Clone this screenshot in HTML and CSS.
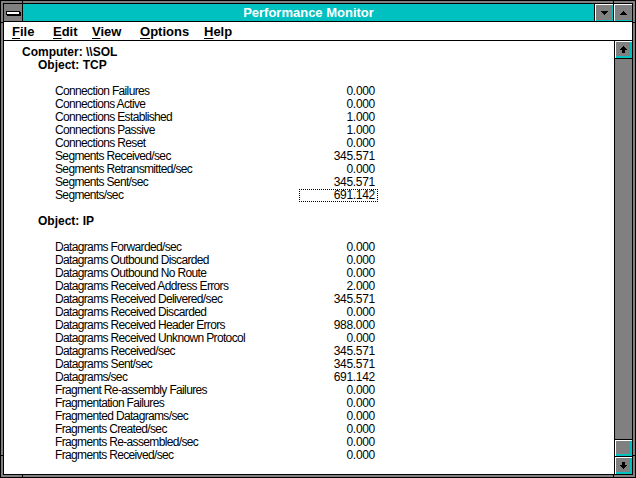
FILE: index.html
```html
<!DOCTYPE html>
<html>
<head>
<meta charset="utf-8">
<title>Performance Monitor</title>
<link rel="stylesheet" href="styles.css">
</head>
<body>
<div class="window">
  <div class="frame">
    <div class="titlebar">
      <div class="sysmenu"><span class="sysbar"></span></div>
      <div class="title">Performance Monitor</div>
      <div class="capbtn">
        <svg width="7" height="4" viewBox="0 0 7 4" shape-rendering="crispEdges"><rect x="0" y="0" width="7" height="1"/><rect x="1" y="1" width="5" height="1"/><rect x="2" y="2" width="3" height="1"/><rect x="3" y="3" width="1" height="1"/></svg>
      </div>
      <div class="capbtn">
        <svg width="7" height="4" viewBox="0 0 7 4" shape-rendering="crispEdges"><rect x="3" y="0" width="1" height="1"/><rect x="2" y="1" width="3" height="1"/><rect x="1" y="2" width="5" height="1"/><rect x="0" y="3" width="7" height="1"/></svg>
      </div>
    </div>
    <div class="menubar">
      <span class="mi mi-file"><u>F</u>ile</span>
      <span class="mi mi-edit"><u>E</u>dit</span>
      <span class="mi mi-view"><u>V</u>iew</span>
      <span class="mi mi-options"><u>O</u>ptions</span>
      <span class="mi"><u>H</u>elp</span>
    </div>
    <div class="main">
      <div class="client">
        <div class="line computer">Computer: \\SOL</div>
        <div class="line object">Object: TCP</div>
        <div class="line"></div>
        <div class="row"><span class="label">Connection Failures</span><span class="val">0.000</span></div>
        <div class="row"><span class="label">Connections Active</span><span class="val">0.000</span></div>
        <div class="row"><span class="label">Connections Established</span><span class="val">1.000</span></div>
        <div class="row"><span class="label">Connections Passive</span><span class="val">1.000</span></div>
        <div class="row"><span class="label">Connections Reset</span><span class="val">0.000</span></div>
        <div class="row"><span class="label">Segments Received/sec</span><span class="val">345.571</span></div>
        <div class="row"><span class="label">Segments Retransmitted/sec</span><span class="val">0.000</span></div>
        <div class="row"><span class="label">Segments Sent/sec</span><span class="val">345.571</span></div>
        <div class="row"><span class="label">Segments/sec</span><span class="val focus">691.142</span></div>
        <div class="line"></div>
        <div class="line object">Object: IP</div>
        <div class="line"></div>
        <div class="row"><span class="label">Datagrams Forwarded/sec</span><span class="val">0.000</span></div>
        <div class="row"><span class="label">Datagrams Outbound Discarded</span><span class="val">0.000</span></div>
        <div class="row"><span class="label">Datagrams Outbound No Route</span><span class="val">0.000</span></div>
        <div class="row"><span class="label">Datagrams Received Address Errors</span><span class="val">2.000</span></div>
        <div class="row"><span class="label">Datagrams Received Delivered/sec</span><span class="val">345.571</span></div>
        <div class="row"><span class="label">Datagrams Received Discarded</span><span class="val">0.000</span></div>
        <div class="row"><span class="label">Datagrams Received Header Errors</span><span class="val">988.000</span></div>
        <div class="row"><span class="label">Datagrams Received Unknown Protocol</span><span class="val">0.000</span></div>
        <div class="row"><span class="label">Datagrams Received/sec</span><span class="val">345.571</span></div>
        <div class="row"><span class="label">Datagrams Sent/sec</span><span class="val">345.571</span></div>
        <div class="row"><span class="label">Datagrams/sec</span><span class="val">691.142</span></div>
        <div class="row"><span class="label">Fragment Re-assembly Failures</span><span class="val">0.000</span></div>
        <div class="row"><span class="label">Fragmentation Failures</span><span class="val">0.000</span></div>
        <div class="row"><span class="label">Fragmented Datagrams/sec</span><span class="val">0.000</span></div>
        <div class="row"><span class="label">Fragments Created/sec</span><span class="val">0.000</span></div>
        <div class="row"><span class="label">Fragments Re-assembled/sec</span><span class="val">0.000</span></div>
        <div class="row"><span class="label">Fragments Received/sec</span><span class="val">0.000</span></div>
      </div>
      <div class="vscroll">
        <div class="sbtn sbtn-up">
          <svg width="7" height="7" viewBox="0 0 7 7" shape-rendering="crispEdges"><rect x="3" y="0" width="1" height="1"/><rect x="2" y="1" width="3" height="1"/><rect x="1" y="2" width="5" height="1"/><rect x="0" y="3" width="7" height="1"/><rect x="2" y="4" width="3" height="3"/></svg>
        </div>
        <div class="track"></div>
        <div class="thumb"></div>
        <div class="sbtn sbtn-down">
          <svg width="7" height="7" viewBox="0 0 7 7" shape-rendering="crispEdges"><rect x="2" y="0" width="3" height="3"/><rect x="0" y="3" width="7" height="1"/><rect x="1" y="4" width="5" height="1"/><rect x="2" y="5" width="3" height="1"/><rect x="3" y="6" width="1" height="1"/></svg>
        </div>
      </div>
    </div>
  </div>
  <span class="notch notch-h notch-t1"></span>
  <span class="notch notch-h notch-t2"></span>
  <span class="notch notch-h notch-b1"></span>
  <span class="notch notch-h notch-b2"></span>
  <span class="notch notch-v notch-l1"></span>
  <span class="notch notch-v notch-l2"></span>
  <span class="notch notch-v notch-r1"></span>
  <span class="notch notch-v notch-r2"></span>
</div>
</body>
</html>
```
FILE: styles.css
```css
* { box-sizing: border-box; }
html, body { margin: 0; padding: 0; background: #fff; }

.window {
  position: relative;
  width: 636px;
  height: 478px;
  border: 1px solid #000;
  padding: 2px;
  background: #808080;
  font-family: "Liberation Sans", Arial, sans-serif;
  color: #000;
}

.frame {
  height: 100%;
  border: 1px solid #000;
  display: flex;
  flex-direction: column;
  background: #fff;
}

/* title bar */
.titlebar {
  height: 18px;
  display: flex;
  background: #00c0c0;
  border-bottom: 1px solid #000;
  flex: none;
}
.sysmenu {
  width: 19px;
  background: #808080;
  border-right: 1px solid #000;
  display: flex;
  align-items: center;
  justify-content: center;
}
.sysbar {
  display: block;
  width: 14px;
  height: 4px;
  background: #fff;
  border: 1px solid #000;
  box-shadow: 1px 1px 0 #000;
  margin-left: -1px;
}
.title {
  flex: 1;
  text-align: center;
  color: #fff;
  font-weight: bold;
  font-size: 13px;
  line-height: 17px;
}
.capbtn {
  width: 19px;
  border-left: 1px solid #000;
  background: #808080;
  box-shadow: inset 1px 1px 0 #fff, inset -1px -1px 0 #00c0c0;
  display: flex;
  align-items: center;
  justify-content: center;
}
.capbtn svg { display: block; fill: #000; }

/* menu bar */
.menubar {
  height: 19px;
  border-bottom: 1px solid #000;
  display: flex;
  padding-left: 8px;
  padding-top: 1px;
  font-weight: bold;
  font-size: 13px;
  line-height: 17px;
  flex: none;
}
.mi { display: block; white-space: nowrap; }
.mi u { text-decoration-thickness: 1px; text-underline-offset: 2px; }
.mi-file { width: 41px; }
.mi-edit { width: 39px; }
.mi-view { width: 48px; }
.mi-options { width: 64px; }

/* main area */
.main {
  flex: 1;
  display: flex;
  min-height: 0;
}
.client {
  flex: 1;
  padding-top: 5px;
  padding-left: 18px;
  overflow: hidden;
}
.line {
  height: 13px;
  font-size: 12px;
  line-height: 13px;
  font-weight: bold;
  white-space: nowrap;
}
.object { padding-left: 16px; }

.row {
  display: grid;
  grid-template-columns: 244px 79px;
  padding-left: 33px;
  height: 13px;
  font-size: 12px;
  line-height: 13px;
  letter-spacing: -0.65px;
  white-space: nowrap;
}
.val {
  text-align: right;
  padding-right: 3px;
  letter-spacing: -0.3px;
}
.val.focus {
  outline: 1px dotted #000;
  outline-offset: -1px;
}

/* scrollbar */
.vscroll {
  width: 18px;
  border-left: 1px solid #000;
  background: #808080;
  display: flex;
  flex-direction: column;
  flex: none;
}
.sbtn {
  height: 18px;
  background: #808080;
  box-shadow: inset 1px 1px 0 #fff, inset -2px -2px 0 #00c0c0;
  display: flex;
  align-items: center;
  justify-content: center;
  flex: none;
}
.sbtn svg { display: block; fill: #000; }
.sbtn-up { border-bottom: 1px solid #000; }
.sbtn-down { border-top: 1px solid #000; }
.track { flex: 1; }
.thumb {
  height: 17px;
  border-top: 1px solid #000;
  background: #808080;
  box-shadow: inset 1px 1px 0 #fff, inset -2px -2px 0 #00c0c0;
  flex: none;
}

/* frame corner notches */
.notch { position: absolute; background: #000; }
.notch-h { width: 1px; height: 2px; }
.notch-v { width: 2px; height: 1px; }
.notch-t1 { top: 0; left: 21px; }
.notch-t2 { top: 0; left: 612px; }
.notch-b1 { bottom: 0; left: 21px; }
.notch-b2 { bottom: 0; left: 612px; }
.notch-l1 { left: 0; top: 21px; }
.notch-l2 { left: 0; top: 454px; }
.notch-r1 { right: 0; top: 21px; }
.notch-r2 { right: 0; top: 454px; }
```
